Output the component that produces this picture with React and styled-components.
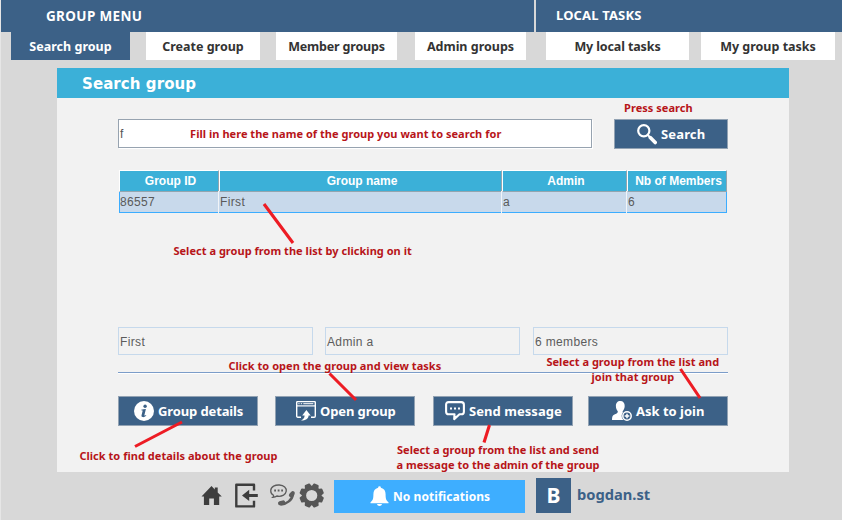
import React from 'react';
import styled, { createGlobalStyle } from 'styled-components';

const navy = '#3c6187';
const cyan = '#3bb0d8';
const ui = '"Noto Sans", "Open Sans", sans-serif';
const arial = '"Liberation Sans", Arial, sans-serif';

const GlobalStyle = createGlobalStyle`
  *, *::before, *::after { box-sizing: border-box; }
  body { margin: 0; background: #fff; }
`;

const Page = styled.div`
  position: relative;
  width: 842px;
  height: 520px;
  display: flex;
  flex-direction: column;
  background: #d8d8d8;
  border-left: 1px solid #e6e6e6;
  font-family: ${ui};
  overflow: hidden;
`;

const MenuBar = styled.header`
  display: grid;
  grid-template-columns: 533px 1fr;
  grid-template-rows: 32px;
  column-gap: 2px;
  height: 32px;
  flex: none;
`;

const MenuTitle = styled.div`
  height: 32px;
  background: ${navy};
  color: #fff;
  font-weight: 700;
  font-size: ${(p) => p.$size}px;
  line-height: ${(p) => p.$line}px;
  padding-left: ${(p) => p.$indent}px;
  letter-spacing: ${(p) => p.$track || 0}px;
  white-space: nowrap;
`;

const Tabs = styled.nav`
  display: grid;
  grid-template-columns: 119px 16px 114px 16px 121px 18px 111px 20px 143px 12px 134px;
  height: 28px;
  margin-left: 10px;
  flex: none;
`;

const Tab = styled.button`
  grid-column: ${(p) => p.$col};
  border: 0;
  padding: 2px 0 0;
  background: ${(p) => (p.$active ? navy : '#fff')};
  color: ${(p) => (p.$active ? '#fff' : '#333')};
  font: 700 12.5px/26px ${ui};
  letter-spacing: ${(p) => p.$track}px;
  white-space: nowrap;
`;

const Panel = styled.main`
  width: 732px;
  height: 404px;
  margin: 8px 0 0 56px;
  flex: none;
  background: #f2f2f2;
`;

const PanelTitle = styled.h1`
  margin: 0;
  height: 30px;
  padding-left: 25px;
  background: ${cyan};
  color: #fff;
  font: 700 15px/32px "DejaVu Sans", sans-serif;
  letter-spacing: 0.08px;
`;

const Content = styled.div`
  padding: 21px 61px 0;
  display: flex;
  flex-direction: column;
`;

const SearchRow = styled.div`
  display: flex;
  justify-content: space-between;
  height: 30px;
`;

const SearchInput = styled.div`
  width: 474px;
  height: 29px;
  border: 1px solid #97a3b0;
  box-shadow: 1px 1px 0 #fff;
  background: #fff;
  padding-left: 1px;
  color: #555;
  font: 12px/29px ${arial};
`;

const ActionButton = styled.button`
  width: ${(p) => p.$width || 140}px;
  height: 30px;
  padding: 0 0 0 ${(p) => p.$indent}px;
  border: 1px solid #92a2b3;
  background: ${navy};
  color: #fff;
  display: flex;
  align-items: center;
  gap: ${(p) => p.$gap || 4}px;
  font: 700 13px/28px ${ui};
  letter-spacing: ${(p) => p.$track || 0}px;
  white-space: nowrap;

  svg { flex: none; }
`;

const Table = styled.div`
  margin: 21px 1px 0;
  width: 608px;
`;

const columns = '100px 283px 125px 100px';

const HeadRow = styled.div`
  display: grid;
  grid-template-columns: ${columns};
  height: 20px;
`;

const HeadCell = styled.div`
  background: ${cyan};
  border: 1px solid #fff;
  border-right-color: #93a5af;
  border-bottom-color: #93a5af;
  color: #fff;
  padding-left: 3px;
  text-align: center;
  font: 700 12px/20px ${arial};
  white-space: nowrap;
`;

const DataRow = styled.div`
  display: grid;
  grid-template-columns: 99px 283px 125px 99px;
  height: 23px;
  border: 1px solid #3cadff;
  background: #c8d9eb;
`;

const DataCell = styled.div`
  border-right: 1px solid #f1f4f8;
  padding-left: ${(p) => (p.$first ? 0 : 1)}px;
  color: #5a5a5a;
  font: 12px/22px ${arial};
  letter-spacing: 0.35px;

  &:last-child { border-right: 0; }
`;

const Fields = styled.div`
  display: grid;
  grid-template-columns: 207px 208px 195px;
  margin-top: 114px;
`;

const Field = styled.div`
  width: 195px;
  height: 28px;
  border: 1px solid #c6d9ec;
  padding-left: 1px;
  color: #5c5c5c;
  font: 12px/28px ${arial};
  letter-spacing: 0.35px;
`;

const Divider = styled.hr`
  width: 610px;
  height: 2px;
  margin: 17px 0 0;
  border: 0;
  border-top: 1px solid #7c9dc9;
  background: #fff;
`;

const Actions = styled.div`
  display: grid;
  grid-template-columns: 157px 158px 155px 140px;
  margin-top: 22px;
`;

const Footer = styled.footer`
  display: flex;
  align-items: flex-end;
  height: 41px;
  padding-left: 199px;
`;

const FooterIcons = styled.div`
  display: flex;
  width: 134px;
  height: 35px;
`;

const Notifications = styled.button`
  display: flex;
  align-items: center;
  gap: 4px;
  width: 191px;
  height: 33px;
  padding: 0 0 0 36px;
  border: 0;
  background: #3eaeff;
  color: #fff;
  font: 700 12px/33px ${ui};
  letter-spacing: 0.06px;
  white-space: nowrap;

  svg { margin-top: -2px; }
`;

const Avatar = styled.div`
  width: 35px;
  height: 35px;
  margin-left: 11px;
  background: ${navy};
  color: #fff;
  text-align: center;
  font: 700 21px/35px ${ui};
`;

const UserName = styled.div`
  height: 35px;
  margin-left: 6px;
  color: ${navy};
  font: 700 14.7px/32px ${ui};
`;

const Note = styled.div`
  position: absolute;
  left: ${(p) => p.$x - 0.9}px;
  top: ${(p) => p.$y}px;
  color: #b71519;
  font: 700 11px/15px ${ui};
  letter-spacing: 0.03px;
  text-align: ${(p) => (p.$center ? 'center' : 'left')};
  white-space: pre;
`;

const Pointers = styled.svg`
  position: absolute;
  left: -1px;
  top: 0;
  pointer-events: none;
`;

const SearchIcon = () => (
  <svg width="20" height="21" viewBox="0 0 20 21" fill="none" stroke="#fff">
    <circle cx="6.8" cy="6.8" r="5.6" strokeWidth="2.2" />
    <path d="M10.8 11l2.4 2.4" strokeWidth="2" />
    <path d="M13.3 13.6l4.9 4.9" strokeWidth="3.6" strokeLinecap="round" />
  </svg>
);

const InfoIcon = () => (
  <svg width="20" height="20" viewBox="0 0 20 20">
    <circle cx="10" cy="10" r="10" fill="#fff" />
    <circle cx="11.1" cy="5.2" r="1.7" fill={navy} />
    <path d="M7.2 8.7c1.7-.2 3-.5 4.7-.7l-1.5 6c-.2.8.3.8 1.6-.1l.3.6c-1.4 1.4-2.5 1.8-3.6 1.6-1.1-.2-1.4-1-1.1-2.1l1-3.9c.2-.6-.2-.8-1.5-.8z" fill={navy} />
  </svg>
);

const OpenIcon = () => (
  <svg width="20" height="20" viewBox="0 0 20 20" fill="none" stroke="#fff">
    <path d="M5 16.2H1.8Q.7 16.2.7 15V1.5Q.7.6 1.6.6h16.8q.9 0 .9.9V15q0 1.2-1.1 1.2H15" strokeWidth="1.4" />
    <path d="M1 4.9h18" strokeWidth="1.2" />
    <path d="M2.3 2.7h1.3M4.8 2.7h1.3M7.3 2.7h10" strokeWidth="1.2" opacity=".8" />
    <path d="M5 19.6c4.8-.2 7.4-1.6 7.6-5.1h2.1L10.4 9l-4.2 5.5h2.4c0 2-1 3.9-3.6 5.1z" fill="#fff" stroke="none" />
  </svg>
);

const MessageIcon = () => (
  <svg width="20" height="20" viewBox="0 0 20 20" fill="none" stroke="#fff">
    <path d="M3.7 1.1h12.6q2.6 0 2.6 2.6v7q0 2.6-2.6 2.6h-1.8l-5.3 4.8.3-4.8H3.7q-2.6 0-2.6-2.6v-7q0-2.6 2.6-2.6z" strokeWidth="2.1" strokeLinejoin="round" />
    <path d="M5 7.6h2M9 7.6h2M13 7.6h2" strokeWidth="2" />
  </svg>
);

const JoinIcon = () => (
  <svg width="20" height="20" viewBox="0 0 20 20">
    <path d="M8.3 0c2.9 0 4.5 2.1 4.4 5-.1 2.3-1 4.2-2 5.3-.2 1.1.1 1.8 1.6 2.4l3 1.4v4.9H0c0-3.600.7-5 3-5.800 1.900-.7 3-1.300 2.800-2.900C4.700 9.200 3.900 7.300 3.900 5 3.800 2.100 5.500 0 8.300 0z" fill="#fff" />
    <circle cx="15" cy="15" r="5.4" fill={navy} />
    <circle cx="15" cy="15" r="4.2" fill={navy} stroke="#fff" strokeWidth="1.5" />
    <path d="M12.7 15h4.6M15 12.7v4.6" stroke="#fff" strokeWidth="1.5" />
  </svg>
);

const ToolIcons = () => (
  <svg width="134" height="35" viewBox="200 478 134 35">
    <path d="M201.5 496.4L211.5 486l3.3 3.4v-2h2.9v5l4.1 4h-2.6v8.5h-5.3v-6.4h-4.7v6.4h-5.3v-8.5z" fill="#3d3d3d" />
    <path d="M254 490.5v-5.7h-17.7v21.600H254v-5.700" fill="none" stroke="#3d3d3d" strokeWidth="2.4" strokeLinejoin="round" />
    <path d="M242 495.4l7.2-5.600v4.200h8.600v2.900h-8.600v4.200z" fill="#3d3d3d" />
    <g fill="none" stroke="#5c5c5c">
      <path d="M273.5 495.3c-3.7-2-3.7-7.2.1-9.2 3.3-1.7 8.5-1.5 11.1.9 2.5 2.3 2 6.2-1.2 8.1-2.2 1.2-4.6 1.4-6.6.9-.9.8-2.2 1.3-4 1.3 1-.8 1-1.3.6-2z" strokeWidth="1.3" />
      <path d="M274.2 490.500h1.800M277.700 490.500h1.800M281.200 490.500h1.800" strokeWidth="1.8" />
      <path d="M280.5 504.4c6 .2 12-4.7 12.6-10.6" strokeWidth="2.5" />
      <path d="M280 503.3l3.2-.9" strokeWidth="4" strokeLinecap="round" />
      <path d="M290.9 495.2l1.9-2.1" strokeWidth="4" strokeLinecap="round" />
    </g>
    <g transform="translate(311.7 495.5)">
      <g fill="#555">
        {[22.5, 67.5, 112.5, 157.5, 202.5, 247.5, 292.5, 337.5].map((a) => (
          <path key={a} d="M-3.8-8L-2.8-11.5Q-2.6-12.2-1.9-12.2H1.9Q2.6-12.2 2.8-11.5L3.8-8z" transform={`rotate(${a})`} />
        ))}
      </g>
      <circle r="7.7" fill="none" stroke="#555" strokeWidth="4.2" />
    </g>
  </svg>
);

const BellIcon = () => (
  <svg width="19" height="20" viewBox="0 0 19 20" fill="#fff">
    <path d="M8.1 1.7a1.4 1.4 0 0 1 2.8 0c3.3.9 4.7 3.2 4.7 6.5 0 4.3.4 6.2 2.9 8v1H.5v-1c2.5-1.8 2.9-3.7 2.9-8 0-3.3 1.4-5.6 4.7-6.5z" />
    <path d="M7 18h5c-.3 1.3-1.2 2-2.5 2S7.3 19.3 7 18z" />
  </svg>
);

const tabs = [
  { label: 'Search group', track: 0.02, active: true },
  { label: 'Create group', track: 0 },
  { label: 'Member groups', track: -0.18 },
  { label: 'Admin groups', track: 0 },
  { label: 'My local tasks', track: -0.12 },
  { label: 'My group tasks', track: 0 },
];

export default function App() {
  return (
    <>
      <GlobalStyle />
      <Page>
        <MenuBar>
          <MenuTitle $size={13.5} $line={33} $indent={45} $track={0.35}>GROUP MENU</MenuTitle>
          <MenuTitle $size={13} $line={31} $indent={20} $track={0.15}>LOCAL TASKS</MenuTitle>
        </MenuBar>
        <Tabs>
          {tabs.map((t, i) => (
            <Tab key={t.label} $col={i * 2 + 1} $active={t.active} $track={t.track}>{t.label}</Tab>
          ))}
        </Tabs>
        <Panel>
          <PanelTitle>Search group</PanelTitle>
          <Content>
            <SearchRow>
              <SearchInput>f</SearchInput>
              <ActionButton $width={114} $indent={22} $track={0.15}><SearchIcon />Search</ActionButton>
            </SearchRow>
            <Table>
              <HeadRow>
                <HeadCell>Group ID</HeadCell>
                <HeadCell>Group name</HeadCell>
                <HeadCell>Admin</HeadCell>
                <HeadCell>Nb of Members</HeadCell>
              </HeadRow>
              <DataRow>
                <DataCell $first>86557</DataCell>
                <DataCell>First</DataCell>
                <DataCell>a</DataCell>
                <DataCell>6</DataCell>
              </DataRow>
            </Table>
            <Fields>
              <Field>First</Field>
              <Field>Admin a</Field>
              <Field>6 members</Field>
            </Fields>
            <Divider />
            <Actions>
              <ActionButton $indent={15} $gap={4} $track={-0.12}><InfoIcon />Group details</ActionButton>
              <ActionButton $indent={20} $track={-0.1}><OpenIcon />Open group</ActionButton>
              <ActionButton $indent={11} $track={0.05}><MessageIcon />Send message</ActionButton>
              <ActionButton $indent={23}><JoinIcon />Ask to join</ActionButton>
            </Actions>
          </Content>
        </Panel>
        <Footer>
          <FooterIcons><ToolIcons /></FooterIcons>
          <Notifications><BellIcon />No notifications</Notifications>
          <Avatar>B</Avatar>
          <UserName>bogdan.st</UserName>
        </Footer>

        <Note $x={624} $y={100}>Press search</Note>
        <Note $x={190} $y={126}>Fill in here the name of the group you want to search for</Note>
        <Note $x={173.3} $y={243}>Select a group from the list by clicking on it</Note>
        <Note $x={228.3} $y={358}>Click to open the group and view tasks</Note>
        <Note $x={546.3} $y={354} $center>{'Select a group from the list and\njoin that group'}</Note>
        <Note $x={79.3} $y={448}>Click to find details about the group</Note>
        <Note $x={396.3} $y={442} $center>{'Select a group from the list and send\na message to the admin of the group'}</Note>
        <Pointers width="842" height="520" viewBox="0 0 842 520" stroke="#ed1c24" strokeWidth="3.1">
          <path d="M264 204L293 243M329.5 373.5L356 400M182 422L135 446.5M489.5 425L484 442.5M680.5 369L700 398" />
        </Pointers>
      </Page>
    </>
  );
}
